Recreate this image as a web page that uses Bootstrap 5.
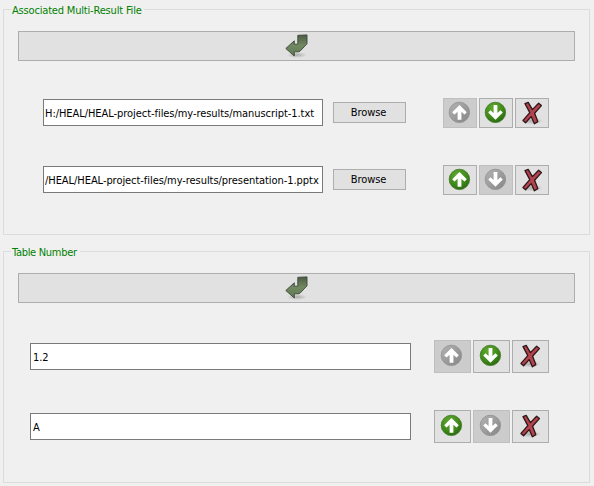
<!DOCTYPE html>
<html lang="en">
<head>
<meta charset="utf-8">
<meta name="viewport" content="width=device-width, initial-scale=1">
<title>Result files</title>
<link href="https://cdn.jsdelivr.net/npm/bootstrap@5.3.0/dist/css/bootstrap.min.css" rel="stylesheet">
<style>
body{background:#f0f0f0;color:#000;font:11px/14px "DejaVu Sans Condensed","DejaVu Sans",sans-serif;font-stretch:condensed;height:486px;overflow:hidden;padding:9px 4px 0 3px}
.group{border:1px solid #dcdcdc;padding:0 14px;height:226px}
.group + .group{margin-top:16px;height:232px}
.group-title{background:#f0f0f0;color:#008000;font-size:11px;line-height:14px;letter-spacing:-.18px;margin:-6px 0 0 -7px;padding:0 3px 0 1px;height:14px;width:133px;white-space:nowrap}
.title-short{width:69px;letter-spacing:-.3px}
.btn.tool{--bs-btn-bg:#e1e1e1;--bs-btn-border-color:#adadad;--bs-btn-hover-bg:#e5f1fb;--bs-btn-hover-border-color:#0078d7;--bs-btn-disabled-bg:#ccc;--bs-btn-disabled-border-color:#bfbfbf;--bs-btn-disabled-opacity:1;--bs-btn-border-radius:0;--bs-btn-color:#000;font:inherit;padding:0;display:flex;justify-content:center;align-items:flex-start}
.btn.add{height:30px;margin-top:13px;padding-top:2px;padding-right:1px}
.btn.browse{width:73px;height:21px;margin:4px 0 0 10px;padding:3px 2px 0 0;letter-spacing:-.1px}
.btn.sq{width:34px;height:30px;padding-top:2px}
.wide .btn.sq{width:37px;height:33px;padding-top:3px;padding-right:1px}
.form-control.field{font:inherit;color:#000;border:1px solid #7a7a7a;border-radius:0;padding:2px 1px 0;margin-top:1px;width:280px;height:27px;letter-spacing:-.055px}
.wide .form-control.field{width:381px;margin-top:3px;padding-left:2px}
.line{height:30px;padding-left:25px}
.wide .line{height:33px;padding-left:12px}
.tools{margin-left:37px;gap:2px}
.wide .tools{margin-left:23px}
.m1{margin-top:37px}
.tools svg,.add svg{width:24px;height:24px;display:block;flex:none}
</style>
<script src="https://cdn.jsdelivr.net/npm/bootstrap@5.3.0/dist/js/bootstrap.bundle.min.js"></script>
</head>
<body>
<svg width="0" height="0" class="position-absolute" aria-hidden="true">
<defs>
<radialGradient id="gg" cx=".4" cy=".3" r=".75"><stop offset="0" stop-color="#62aa32"/><stop offset=".6" stop-color="#418b1b"/><stop offset="1" stop-color="#28640f"/></radialGradient>
<linearGradient id="gr" x1="0" y1="0" x2="1" y2="1"><stop offset="0" stop-color="#b4b4b4"/><stop offset="1" stop-color="#858585"/></linearGradient>
<linearGradient id="ga" x1="0" y1="0" x2="0" y2="1"><stop offset="0" stop-color="#4c5c43"/><stop offset=".5" stop-color="#718962"/><stop offset="1" stop-color="#5f7852"/></linearGradient>
<radialGradient id="sh"><stop offset="0" stop-color="#777" stop-opacity=".5"/><stop offset="1" stop-color="#777" stop-opacity="0"/></radialGradient>
<symbol id="arrow" viewBox="0 0 24 24"><path d="M11.5 4L18.8 11.2L16.5 13.6L13.4 10.8V18.8H9.6V10.8L6.5 13.6L4.2 11.2z" fill="#fff"/></symbol>
<symbol id="up" viewBox="0 0 24 24"><circle cx="11.4" cy="11.4" r="10.2" fill="url(#gg)" stroke="#3d7822" stroke-width=".8"/><use href="#arrow" width="24" height="24"/></symbol>
<symbol id="down" viewBox="0 0 24 24"><circle cx="11.4" cy="11.4" r="10.2" fill="url(#gg)" stroke="#3d7822" stroke-width=".8"/><use href="#arrow" width="24" height="24" transform="rotate(180 11.5 11.4)"/></symbol>
<symbol id="up-off" viewBox="0 0 24 24"><circle cx="11.4" cy="11.4" r="10.2" fill="url(#gr)" stroke="#8e8e8e" stroke-width=".8"/><use href="#arrow" width="24" height="24"/></symbol>
<symbol id="down-off" viewBox="0 0 24 24"><circle cx="11.4" cy="11.4" r="10.2" fill="url(#gr)" stroke="#8e8e8e" stroke-width=".8"/><use href="#arrow" width="24" height="24" transform="rotate(180 11.5 11.4)"/></symbol>
<symbol id="del" viewBox="0 0 24 24"><ellipse cx="12" cy="20" rx="11" ry="3.5" fill="url(#sh)"/><path d="M5 2.6L8.2 1.4L12.4 8.6L18.6 2.2L21.4 4.6L14.6 12.2L17.8 20.6L14.4 22.8L11.2 15.6L5.6 21.8L3 19.4L9.8 11.6z" fill="#b3434c" stroke="#2e1719" stroke-width="1.3" stroke-linejoin="round"/></symbol>
<symbol id="enter" viewBox="0 0 24 24"><ellipse cx="13" cy="21" rx="10" ry="3" fill="url(#sh)"/><path d="M13.8 1.3L23 .9V9.8L16 17.2Q15.2 17.8 14.2 17.8H10.3V22L1.8 14.5L10.3 6.8V10.2H13.8z" fill="url(#ga)" stroke="#3c4736" stroke-width=".9" stroke-linejoin="round"/></symbol>
</defs>
</svg>
<section class="group">
<h2 class="group-title">Associated Multi-Result File</h2>
<button class="btn tool add w-100" aria-label="Add"><svg><use href="#enter"/></svg></button>
<div class="line d-flex align-items-start m1"><input class="form-control field" value="H:/HEAL/HEAL-project-files/my-results/manuscript-1.txt" aria-label="File 1"><button class="btn tool browse">Browse</button>
<div class="tools d-flex"><button class="btn tool sq" disabled aria-label="Up"><svg><use href="#up-off"/></svg></button><button class="btn tool sq" aria-label="Down"><svg><use href="#down"/></svg></button><button class="btn tool sq" aria-label="Delete"><svg><use href="#del"/></svg></button></div></div>
<div class="line d-flex align-items-start m1"><input class="form-control field" value="/HEAL/HEAL-project-files/my-results/presentation-1.pptx" aria-label="File 2"><button class="btn tool browse">Browse</button>
<div class="tools d-flex"><button class="btn tool sq" aria-label="Up"><svg><use href="#up"/></svg></button><button class="btn tool sq" disabled aria-label="Down"><svg><use href="#down-off"/></svg></button><button class="btn tool sq" aria-label="Delete"><svg><use href="#del"/></svg></button></div></div>
</section>
<section class="group wide">
<h2 class="group-title title-short">Table Number</h2>
<button class="btn tool add w-100" aria-label="Add"><svg><use href="#enter"/></svg></button>
<div class="line d-flex align-items-start m1"><input class="form-control field" value="1.2" aria-label="Table 1">
<div class="tools d-flex"><button class="btn tool sq" disabled aria-label="Up"><svg><use href="#up-off"/></svg></button><button class="btn tool sq" aria-label="Down"><svg><use href="#down"/></svg></button><button class="btn tool sq" aria-label="Delete"><svg><use href="#del"/></svg></button></div></div>
<div class="line d-flex align-items-start m1"><input class="form-control field" value="A" aria-label="Table 2">
<div class="tools d-flex"><button class="btn tool sq" aria-label="Up"><svg><use href="#up"/></svg></button><button class="btn tool sq" disabled aria-label="Down"><svg><use href="#down-off"/></svg></button><button class="btn tool sq" aria-label="Delete"><svg><use href="#del"/></svg></button></div></div>
</section>
</body>
</html>
